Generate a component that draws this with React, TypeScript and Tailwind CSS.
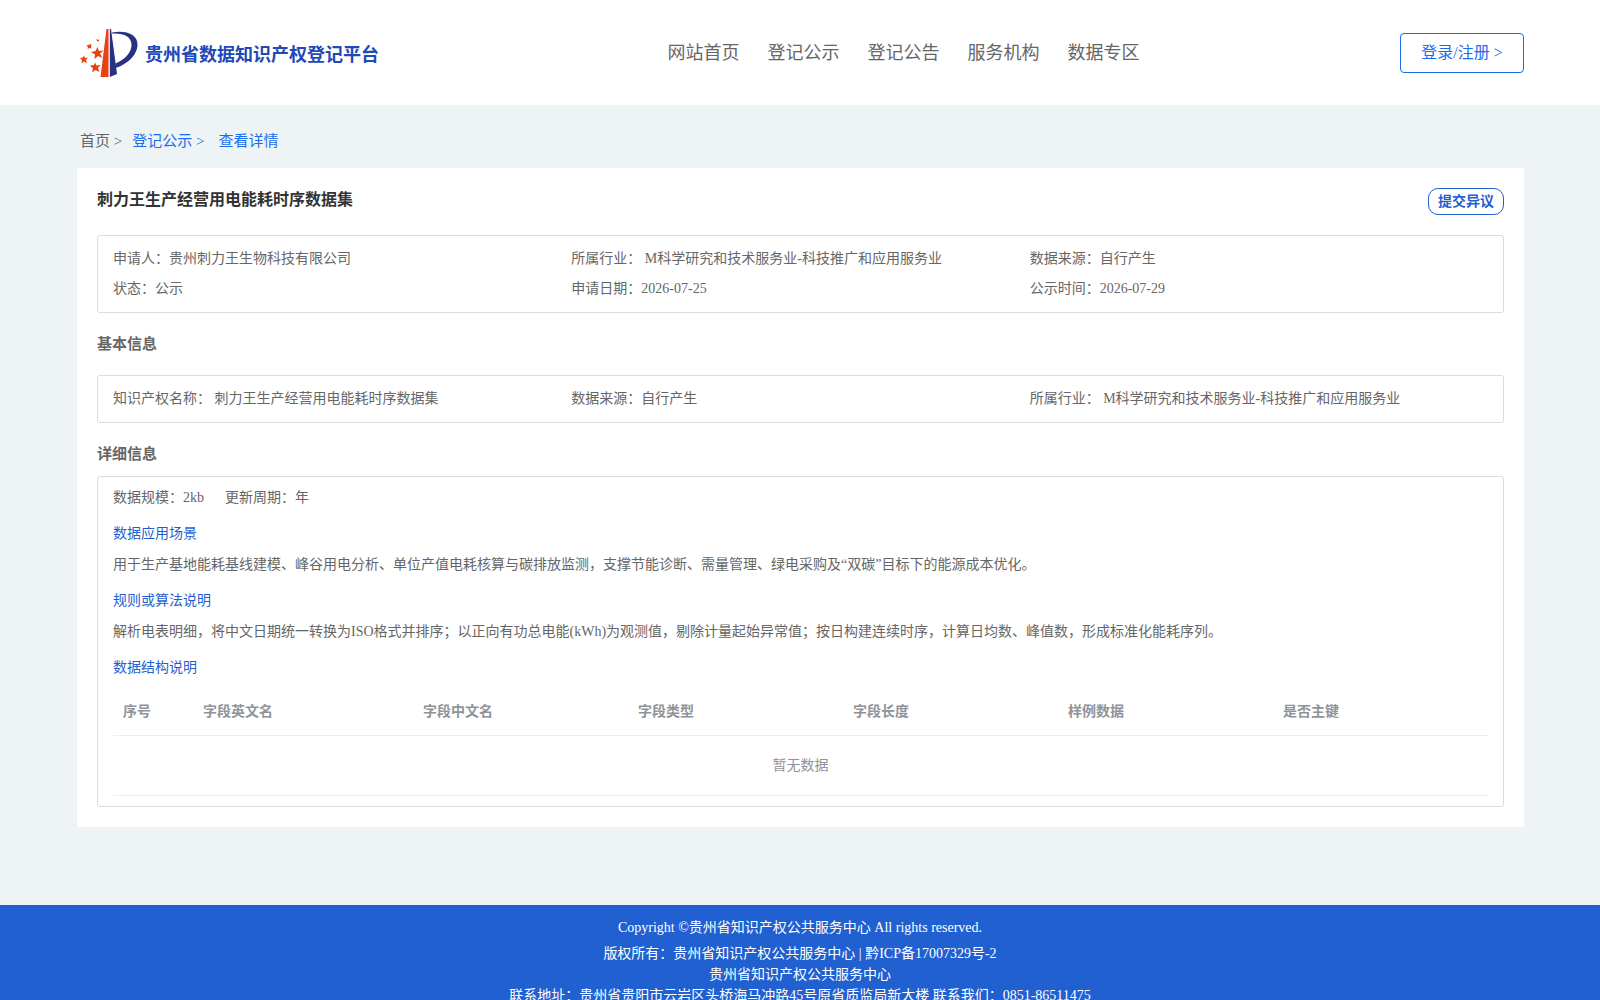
// 登记公示 - 查看详情
import { Fragment } from 'react'
import type { ReactNode } from 'react'

const navItems = ['网站首页', '登记公示', '登记公告', '服务机构', '数据专区']

const summary = [
  '申请人：贵州刺力王生物科技有限公司',
  '所属行业： M科学研究和技术服务业-科技推广和应用服务业',
  '数据来源：自行产生',
  '状态：公示',
  '申请日期：2026-07-25',
  '公示时间：2026-07-29',
]

const basicInfo = [
  '知识产权名称： 刺力王生产经营用电能耗时序数据集',
  '数据来源：自行产生',
  '所属行业： M科学研究和技术服务业-科技推广和应用服务业',
]

const sections = [
  {
    title: '数据应用场景',
    text: '用于生产基地能耗基线建模、峰谷用电分析、单位产值电耗核算与碳排放监测，支撑节能诊断、需量管理、绿电采购及“双碳”目标下的能源成本优化。',
  },
  {
    title: '规则或算法说明',
    text: '解析电表明细，将中文日期统一转换为ISO格式并排序；以正向有功总电能(kWh)为观测值，剔除计量起始异常值；按日构建连续时序，计算日均数、峰值数，形成标准化能耗序列。',
  },
]

const columns = ['序号', '字段英文名', '字段中文名', '字段类型', '字段长度', '样例数据', '是否主键']

function Logo() {
  return (
    <svg viewBox="0 0 58 50" className="h-[50px] w-[58px]" aria-hidden="true">
      <path d="M26.500 1h2v48H20.500Z" fill="#e8430f" />
      <path d="M29.800 1h1.200L37 46l-7.200 3Z" fill="#283183" />
      <path
        d="M32 4.500C47 2 57.500 7 57.500 16.500 57.500 27 47 36.500 35.500 40V35.500C44 32 51.500 25 51.500 17 51.500 8 43 4.800 32 5.500Z"
        fill="#283183"
      />
      <g fill="#e8430f">
        <path d="m17.500 19 1.500 4 4.500-.5-3.500 3 2.500 4.500-4.500-2-3.500 3 .5-4.500-4-2.500 4.500-1Z" />
        <path d="m15 34.500 1.500 3 4-.5-2.500 3 1.500 4-4-2-3.500 2.500 1-4-3-3 4-.5Z" />
        <path d="m4 27.500 1 2.500 3-.5-2 2.500 1 3-3-1.500-2.500 2 .5-3.500L0 30l3-.5Z" />
        <path d="m8 17 3.500-1-.5 2 .5 2.500-2-.5-2 1 .5-2-1.500-1.500Z" />
        <path d="m17 11 1.500 1 1-.5-.5 1.500-1.500.5-1-1.500Z" />
      </g>
    </svg>
  )
}

function InfoBox({ items }: { items: string[] }) {
  return (
    <div className="grid grid-cols-3 rounded-[3px] border border-[#dcdcdc] px-[15px] py-2">
      {items.map((item, i) => (
        <p key={i} className="leading-[30px]">
          {item}
        </p>
      ))}
    </div>
  )
}

function SectionTitle({ children }: { children: ReactNode }) {
  return <h2 className="text-[15px] leading-5 font-bold">{children}</h2>
}

export default function App() {
  return (
    <div className="min-h-screen bg-[#eef3f6] font-['Liberation_Serif','Noto_Sans_CJK_SC',serif] text-sm text-[#666]">
      <header className="flex h-[105px] items-center justify-between bg-white px-[76px]">
        <a href="#" className="flex items-center gap-[7px] pr-7 pl-1">
          <Logo />
          <span className="pt-1 text-lg font-bold text-[#2148b8]">贵州省数据知识产权登记平台</span>
        </a>
        <nav className="flex gap-7 text-lg">
          {navItems.map((item) => (
            <a key={item} href="#">
              {item}
            </a>
          ))}
        </nav>
        <button type="button" className="h-10 w-31 rounded border border-[#1a6dec] text-base text-[#1a6dec]">
          登录/注册 &gt;
        </button>
      </header>

      <main className="pr-[76px] pb-[78px] pl-[77px]">
        {/* 面包屑 */}
        <nav className="flex h-[63px] items-center pt-[10px] pl-[3px] text-[15px]">
          <a href="#">首页 &gt;</a>
          <a href="#" className="ml-[10px] text-[#1a6dec]">
            登记公示 &gt;
          </a>
          <span className="ml-[14px] text-[#1a6dec]">查看详情</span>
        </nav>

        <div className="bg-white p-5">
          <div className="mb-5 flex items-start justify-between">
            <h1 className="text-base leading-6 font-bold text-[#333]">刺力王生产经营用电能耗时序数据集</h1>
            <button
              type="button"
              className="h-[27px] rounded-[10px] border border-[#1f5fd0] px-[9px] text-sm leading-none font-bold text-[#1f5fd0]"
            >
              提交异议
            </button>
          </div>

          <InfoBox items={summary} />

          <div className="py-[21px]">
            <SectionTitle>基本信息</SectionTitle>
          </div>
          <InfoBox items={basicInfo} />

          <div className="pt-[21px] pb-3">
            <SectionTitle>详细信息</SectionTitle>
          </div>
          <div className="rounded-[3px] border border-[#dcdcdc] px-[15px] pt-[11px] pb-[10px]">
            <div className="flex gap-[21px] leading-5">
              <span>数据规模：2kb</span>
              <span>更新周期：年</span>
            </div>
            {sections.map((section) => (
              <Fragment key={section.title}>
                <h3 className="mt-4 leading-5 text-[#1f5fd0]">{section.title}</h3>
                <p className="mt-[11px] leading-5">{section.text}</p>
              </Fragment>
            ))}
            <h3 className="mt-4 leading-5 text-[#1f5fd0]">数据结构说明</h3>

            <table className="mt-[9px] w-full table-fixed border-collapse text-left leading-6 text-[#909399]">
              <colgroup>
                <col className="w-20" />
                <col className="w-[220px]" />
                <col span={5} />
              </colgroup>
              <thead>
                <tr className="h-12 border-b border-[#ebeef5]">
                  {columns.map((column) => (
                    <th key={column} className="px-[10px] pt-[2px] font-bold">
                      {column}
                    </th>
                  ))}
                </tr>
              </thead>
              <tbody>
                <tr className="h-[60px] border-b border-[#ebeef5]">
                  <td colSpan={columns.length} className="pt-[2px] text-center">
                    暂无数据
                  </td>
                </tr>
              </tbody>
            </table>
          </div>
        </div>
      </main>

      <footer className="bg-[#2060d0] pt-3 pb-5 text-center leading-[21px] text-white">
        <p className="mb-[5px]">Copyright ©贵州省知识产权公共服务中心 All rights reserved.</p>
        <p>版权所有：贵州省知识产权公共服务中心 | 黔ICP备17007329号-2</p>
        <p>贵州省知识产权公共服务中心</p>
        <p>联系地址：贵州省贵阳市云岩区头桥海马冲路45号原省质监局新大楼 联系我们：0851-86511475</p>
      </footer>
    </div>
  )
}
